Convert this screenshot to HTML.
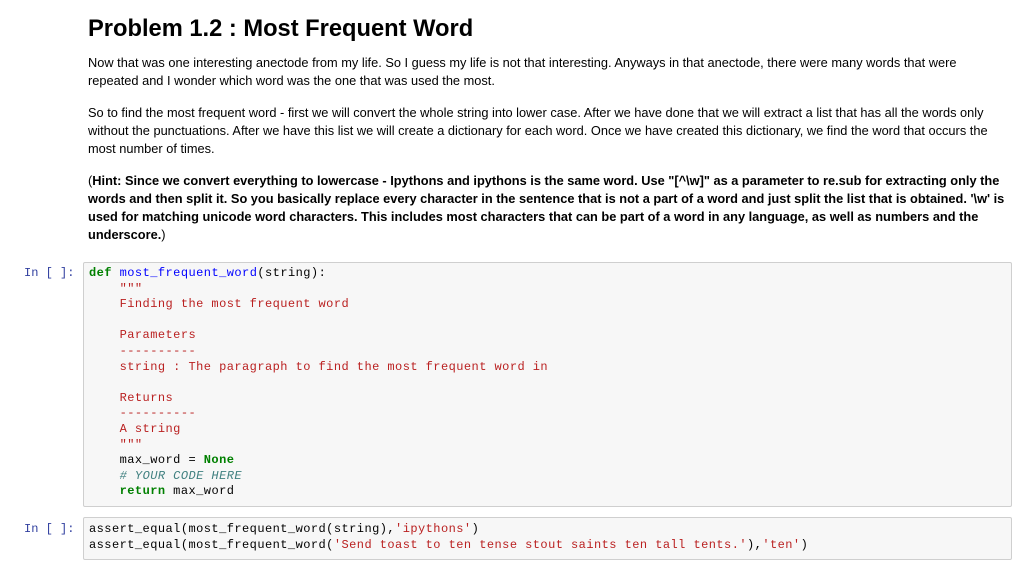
<!DOCTYPE html>
<html><head><meta charset="utf-8"><style>
body{margin:0;width:1024px;height:574px;background:#fff;position:relative;overflow:hidden;font-family:"Liberation Sans",Arial,sans-serif;color:#000}
h1{position:absolute;left:88px;top:16px;margin:0;font-size:23.7px;font-weight:bold}
.p{position:absolute;left:88px;font-size:12.8px;line-height:18px;white-space:nowrap}
.b{font-weight:bold}
.box{position:absolute;left:83px;right:12px;background:#f7f7f7;border:1px solid #cfcfcf;border-radius:2px}
.code{position:absolute;left:89px;font-family:"Liberation Mono",monospace;font-size:12px;letter-spacing:0.45px;line-height:15.6px;white-space:pre;color:#000}
.pr{position:absolute;left:24px;font-family:"Liberation Mono",monospace;font-size:12px;color:#303f9f;white-space:pre}
.k{color:#008000;font-weight:bold}.f{color:#0000ff}.s{color:#ba2121}.c{color:#408080;font-style:italic}
</style></head><body>
<h1>Problem 1.2 : Most Frequent Word</h1>
<div class="p" style="top:54px">Now that was one interesting anectode from my life. So I guess my life is not that interesting. Anyways in that anectode, there were many words that were<br>repeated and I wonder which word was the one that was used the most.</div>
<div class="p" style="top:104px">So to find the most frequent word - first we will convert the whole string into lower case. After we have done that we will extract a list that has all the words only<br>without the punctuations. After we have this list we will create a dictionary for each word. Once we have created this dictionary, we find the word that occurs the<br>most number of times.</div>
<div class="p" style="top:172px">(<span class="b">Hint: Since we convert everything to lowercase - Ipythons and ipythons is the same word. Use "[^\w]" as a parameter to re.sub for extracting only the<br>words and then split it. So you basically replace every character in the sentence that is not a part of a word and just split the list that is obtained. '\w' is<br>used for matching unicode word characters. This includes most characters that can be part of a word in any language, as well as numbers and the<br>underscore.</span>)</div>
<div class="box" style="top:262px;height:243px"></div>
<div class="pr" style="top:266px">In [ ]:</div>
<div class="code" style="top:266px"><span class="k">def</span> <span class="f">most_frequent_word</span>(string):
    <span class="s">"""
    Finding the most frequent word

    Parameters
    ----------
    string : The paragraph to find the most frequent word in

    Returns
    ----------
    A string
    """</span>
    max_word = <span class="k">None</span>
    <span class="c"># YOUR CODE HERE</span>
    <span class="k">return</span> max_word</div>
<div class="box" style="top:517px;height:41px"></div>
<div class="pr" style="top:522px">In [ ]:</div>
<div class="code" style="top:522px">assert_equal(most_frequent_word(string),<span class="s">'ipythons'</span>)
assert_equal(most_frequent_word(<span class="s">'Send toast to ten tense stout saints ten tall tents.'</span>),<span class="s">'ten'</span>)</div>
</body></html>
